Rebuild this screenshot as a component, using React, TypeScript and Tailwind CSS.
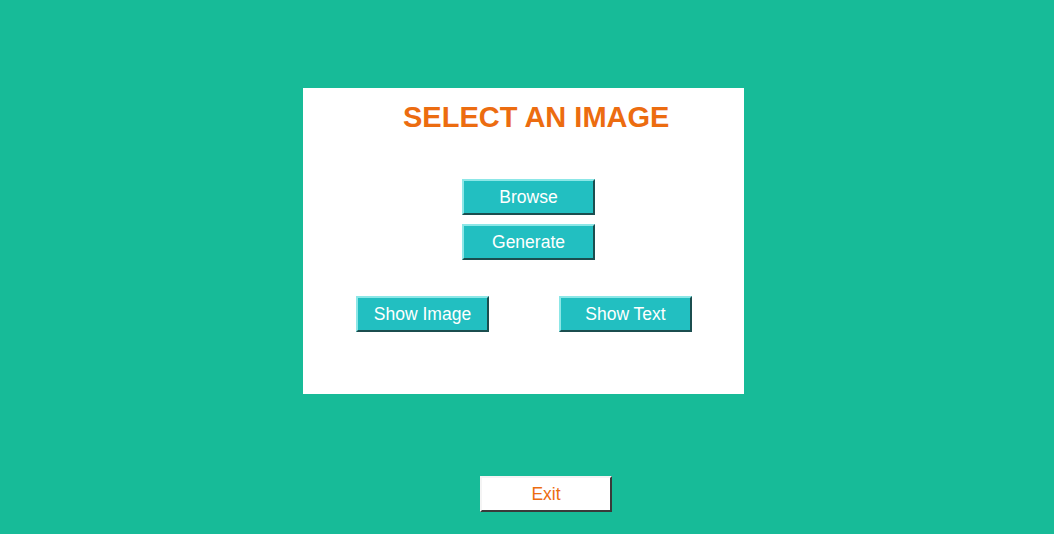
const btn =
  "flex h-[36px] w-[133px] items-center justify-center border-2 border-t-[#8ce7e7] border-l-[#8ce7e7] border-r-[#1b4e4f] border-b-[#1b4e4f] bg-[#22bfc1] text-[17.5px] text-white";

export default function App() {
  return (
    <div
      className="flex h-[534px] w-full flex-col bg-[#17bb98]"
      style={{ fontFamily: '"Liberation Sans", Arial, sans-serif' }}
    >
      <div className="ml-[303px] mt-[88px] flex h-[306px] w-[441px] flex-col bg-white">
        <h1 className="pl-[100px] pt-[13px] text-[29px] font-bold leading-[33px] text-[#ec6c10]">
          SELECT AN IMAGE
        </h1>
        <div className="mt-[45px] flex flex-col gap-[9px] pl-[159px]">
          <button className={btn}>Browse</button>
          <button className={btn}>Generate</button>
        </div>
        <div className="mt-[36px] flex gap-[70px] pl-[53px]">
          <button className={btn}>Show Image</button>
          <button className={btn}>Show Text</button>
        </div>
      </div>
      <button className="ml-[480px] mt-[82px] flex h-[36px] w-[132px] items-center justify-center border-2 border-t-[#f4f4f4] border-l-[#f4f4f4] border-r-[#3a3a3a] border-b-[#3a3a3a] bg-white text-[17.5px] text-[#ec6c10]">
        Exit
      </button>
    </div>
  );
}
